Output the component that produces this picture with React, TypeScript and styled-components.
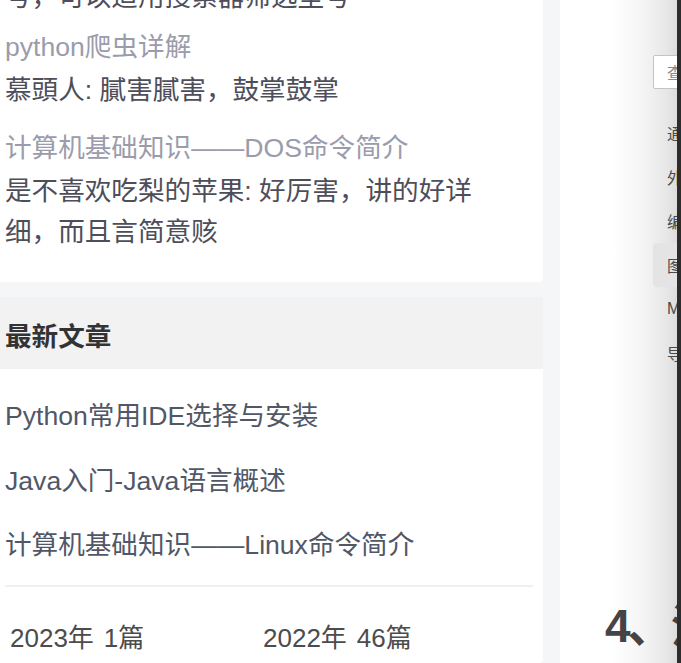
import React from "react";
import styled, { createGlobalStyle } from "styled-components";

const Global = createGlobalStyle`
  html, body { margin: 0; padding: 0; }
  body {
    background: #f5f6f7;
    width: 681px;
    height: 663px;
    overflow: hidden;
    font-family: "Liberation Sans", "Noto Sans CJK SC", sans-serif;
  }
`;

const Page = styled.div`
  display: flex;
  align-items: stretch;
  width: 681px;
  height: 663px;
  overflow: hidden;
  background: #f5f6f7;
`;

const Sidebar = styled.div`
  width: 543px;
  flex: none;
  display: flex;
  flex-direction: column;
`;

const Card = styled.div<{ $grow?: boolean }>`
  background: #ffffff;
  border-radius: 0 0 4px 0;
  padding: 0 10px 0 5px;
  flex: ${(p) => (p.$grow ? 1 : "none")};
`;

const CommentsCard = styled(Card)`
  margin-top: -26px;
  padding-bottom: 29px;
`;

const CommentItem = styled.div<{ $gap: number }>`
  max-width: 480px;
  margin-top: ${(p) => p.$gap}px;
`;

const PostTitle = styled.div`
  font-size: 26.6px;
  line-height: 40px;
  color: #9b9cab;
  white-space: nowrap;
`;

const CommentText = styled.div`
  font-size: 26.6px;
  line-height: 41px;
  color: #4d4e5a;
  margin-top: 3px;
`;

const SectionHeader = styled.div`
  margin-top: 15px;
  height: 72px;
  flex: none;
  display: flex;
  align-items: center;
  padding: 2px 0 0 5px;
  box-sizing: border-box;
  background: #f2f2f2;
  font-size: 26.6px;
  font-weight: 700;
  color: #333333;
`;

const ArticleList = styled.div`
  display: flex;
  flex-direction: column;
  gap: 24.5px;
  padding-top: 27px;
`;

const ArticleLink = styled.div`
  font-size: 26.6px;
  line-height: 40px;
  color: #515767;
  white-space: nowrap;
`;

const Divider = styled.div`
  margin-top: 20px;
  height: 2px;
  width: 528px;
  background: #f0f0f0;
`;

const Archive = styled.div`
  display: grid;
  grid-template-columns: 253px 253px;
  padding: 31px 0 0 5px;
`;

const ArchiveItem = styled.div`
  font-size: 26px;
  line-height: 40px;
  color: #4c4c4c;
  white-space: nowrap;
`;

const Count = styled.span`
  margin-left: 10px;
`;

const Main = styled.div`
  margin-left: 17px;
  flex: 1;
  min-width: 0;
  overflow: hidden;
  border-right: 4px solid #2c2c2c;
  background: linear-gradient(
    to right,
    #ffffff 0%,
    #ffffff 45%,
    #f4f4f4 72%,
    #e6e6e6 92%,
    #dcdcdc 100%
  );
  display: flex;
  flex-direction: column;
`;

const SettingsPane = styled.div`
  padding: 55px 0 0 93px;
  width: 260px;
  flex: none;
`;

const SearchBox = styled.div`
  height: 34px;
  box-sizing: border-box;
  border: 1px solid #c4c4c4;
  border-radius: 2px;
  padding-left: 13px;
  font-size: 16px;
  line-height: 32px;
  color: #8a8a8a;
  font-family: "Noto Sans CJK SC", sans-serif;
  background: #ffffff;
`;

const Menu = styled.div`
  margin-top: 22px;
  display: flex;
  flex-direction: column;
`;

const MenuItem = styled.div<{ $active?: boolean }>`
  height: 44px;
  display: flex;
  align-items: center;
  padding-left: 14px;
  font-size: 16px;
  color: #4a4a4a;
  font-family: "Liberation Sans", "Noto Sans CJK SC", sans-serif;
  border-radius: 4px;
  background: ${(p) => (p.$active ? "#e4e4e4" : "transparent")};
`;

const Heading = styled.div`
  margin: 223px 0 0 45px;
  font-size: 46px;
  line-height: 56px;
  font-weight: 700;
  letter-spacing: -3px;
  color: #444444;
  white-space: nowrap;
`;

const comments = [
  { title: "python爬虫详解", text: "慕頭人: 膩害膩害，鼓掌鼓掌" },
  {
    title: "计算机基础知识——DOS命令简介",
    text: "是不喜欢吃梨的苹果: 好厉害，讲的好详细，而且言简意赅",
  },
];

const articles = [
  "Python常用IDE选择与安装",
  "Java入门-Java语言概述",
  "计算机基础知识——Linux命令简介",
];

const archives = [
  { year: "2023年", count: "1篇" },
  { year: "2022年", count: "46篇" },
];

const menu = ["通用", "外观", "编辑器", "图像", "Markdown", "导出"];

export default function App() {
  return (
    <>
      <Global />
      <Page>
        <Sidebar>
          <CommentsCard>
            <CommentItem $gap={0}>
              <CommentText>号，可以适用搜索器筛选型号</CommentText>
            </CommentItem>
            {comments.map((c, i) => (
              <CommentItem key={c.title} $gap={i === 0 ? 9 : 17}>
                <PostTitle>{c.title}</PostTitle>
                <CommentText>{c.text}</CommentText>
              </CommentItem>
            ))}
          </CommentsCard>
          <SectionHeader>最新文章</SectionHeader>
          <Card $grow>
            <ArticleList>
              {articles.map((a) => (
                <ArticleLink key={a}>{a}</ArticleLink>
              ))}
            </ArticleList>
            <Divider />
            <Archive>
              {archives.map((a) => (
                <ArchiveItem key={a.year}>
                  {a.year}
                  <Count>{a.count}</Count>
                </ArchiveItem>
              ))}
            </Archive>
          </Card>
        </Sidebar>
        <Main>
          <SettingsPane>
            <SearchBox>查找设置</SearchBox>
            <Menu>
              {menu.map((m) => (
                <MenuItem key={m} $active={m === "图像"}>
                  {m}
                </MenuItem>
              ))}
            </Menu>
          </SettingsPane>
          <Heading>4、注意事项</Heading>
        </Main>
      </Page>
    </>
  );
}
